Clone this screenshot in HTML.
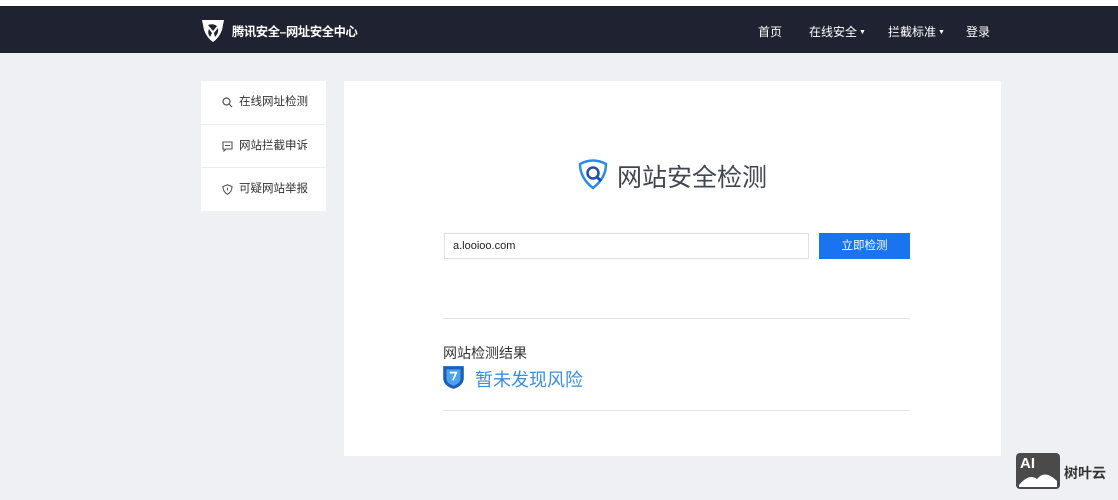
<!DOCTYPE html>
<html><head><meta charset="utf-8"><style>
*{margin:0;padding:0;box-sizing:border-box}
body{width:1118px;height:500px;background:#eef0f4;font-family:"Liberation Sans","Noto Sans CJK SC",sans-serif;position:relative;overflow:hidden}
.top{position:absolute;left:0;top:0;width:1118px;height:6px;background:#fff}
.nav{position:absolute;left:0;top:6px;width:1118px;height:47px;background:#1f2230;color:#fff}
.logo{position:absolute;left:232px;top:16px;font-size:12.3px;font-weight:bold;letter-spacing:-0.4px}
.nav a{position:absolute;top:17px;font-size:12px;color:#fff}
.nav a small{font-size:7px;vertical-align:2px;margin-left:2px}
.side{position:absolute;left:201px;top:81px;width:125px;height:130px;background:#fff}
.side div{height:43.5px;border-bottom:1px solid #ebedf0;font-size:11.5px;color:#333;padding-left:38px;line-height:43px;position:relative}
.side div:last-child{border:none}
.side svg{position:absolute;left:21px;top:16px}
.main{position:absolute;left:344px;top:81px;width:657px;height:375px;background:#fff}
.title{position:absolute;left:617px;top:158px;font-size:25px;color:#404552}
.inp{position:absolute;left:444px;top:233px;width:365px;height:26px;border:1px solid #dcdfe4;font-size:11px;color:#222;padding-left:8px;line-height:24px}
.btn{position:absolute;left:819px;top:233px;width:91px;height:26px;background:#1a73f0;color:#fff;font-size:11.5px;text-align:center;line-height:26px}
.hr{position:absolute;left:443px;width:467px;height:1px;background:#e3e5e8}
.res{position:absolute;left:443px;top:343px;font-size:14px;color:#333}
.safe{position:absolute;left:475px;top:366px;font-size:18px;color:#3a8ee0}
.wm{position:absolute;left:1016px;top:453px;width:44px;height:36px;background:#4a4a4a;border-radius:4px}
.wmt{position:absolute;left:1064px;top:463px;font-size:14px;color:#333;font-weight:bold}
</style></head><body>
<div class="top"></div>
<div class="nav">
<svg style="position:absolute;left:200px;top:11px" width="26" height="26" viewBox="0 0 26 26"><path d="M2 3 L24 3 L22 13 Q19 21 13 25 Q7 21 4 13 Z" fill="#fff"/><path d="M8 8 Q13 6 17 9 L13 14 Z M9 12 L12 16 L10 20 Q7 16 9 12Z M14 16 L18 11 Q19 16 15 20Z" fill="#1f2230"/></svg>
<div class="logo">腾讯安全–网址安全中心</div>
<a style="left:758px">首页</a><a style="left:809px">在线安全<small>▼</small></a><a style="left:888px">拦截标准<small>▼</small></a><a style="left:966px">登录</a>
</div>
<div class="side">
<div><svg width="11" height="11" viewBox="0 0 11 11"><circle cx="4.5" cy="4.5" r="3.5" fill="none" stroke="#555" stroke-width="1.2"/><path d="M7 7 L10 10" stroke="#555" stroke-width="1.2"/></svg>在线网址检测</div>
<div><svg width="11" height="11" viewBox="0 0 11 11"><path d="M1 1 H10 V8 H4 L2 10 V8 H1 Z" fill="none" stroke="#555" stroke-width="1.1"/><path d="M3 4.5 H8" stroke="#555"/></svg>网站拦截申诉</div>
<div><svg width="11" height="11" viewBox="0 0 11 11"><path d="M5.5 0.8 L10 2.5 Q10 8 5.5 10.2 Q1 8 1 2.5 Z" fill="none" stroke="#555" stroke-width="1.1"/><path d="M5.5 3.5 V6.5" stroke="#555"/></svg>可疑网站举报</div>
</div>
<div class="main"></div>
<svg style="position:absolute;left:577px;top:158px" width="32" height="32" viewBox="0 0 32 32"><path d="M3 6 Q16 -1 29 6 Q29 20 16 30 Q3 20 3 6Z" fill="none" stroke="#2b8be8" stroke-width="2.5"/><circle cx="16" cy="15" r="5.5" fill="none" stroke="#1f4fb0" stroke-width="2.5"/><path d="M20 19 L24 23" stroke="#1f4fb0" stroke-width="2.8"/></svg>
<div class="title">网站安全检测</div>
<div class="inp">a.looioo.com</div>
<div class="btn">立即检测</div>
<div class="hr" style="top:318px"></div>
<div class="res">网站检测结果</div>
<svg style="position:absolute;left:442px;top:364px" width="23" height="26" viewBox="0 0 21 24"><path d="M1 2 L20 2 L20 13 Q20 20 10.5 23 Q1 20 1 13Z" fill="#1d5fb8"/><path d="M4 5 L17 5 L17 13 Q17 18 10.5 20 Q4 18 4 13Z" fill="#4da2f0"/><path d="M7 8 H13 L10 15" fill="none" stroke="#fff" stroke-width="1.6"/></svg>
<div class="safe">暂未发现风险</div>
<div class="hr" style="top:410px"></div>
<div class="wm"><span style="position:absolute;left:4px;top:2px;color:#fff;font-weight:bold;font-size:15px">AI</span><svg style="position:absolute;left:3px;top:14px" width="38" height="20" viewBox="0 0 38 20"><path d="M0 18 Q10 6 18 12 Q26 2 38 14 V20 H0Z" fill="#fff"/></svg></div>
<div class="wmt">树叶云</div>
</body></html>
